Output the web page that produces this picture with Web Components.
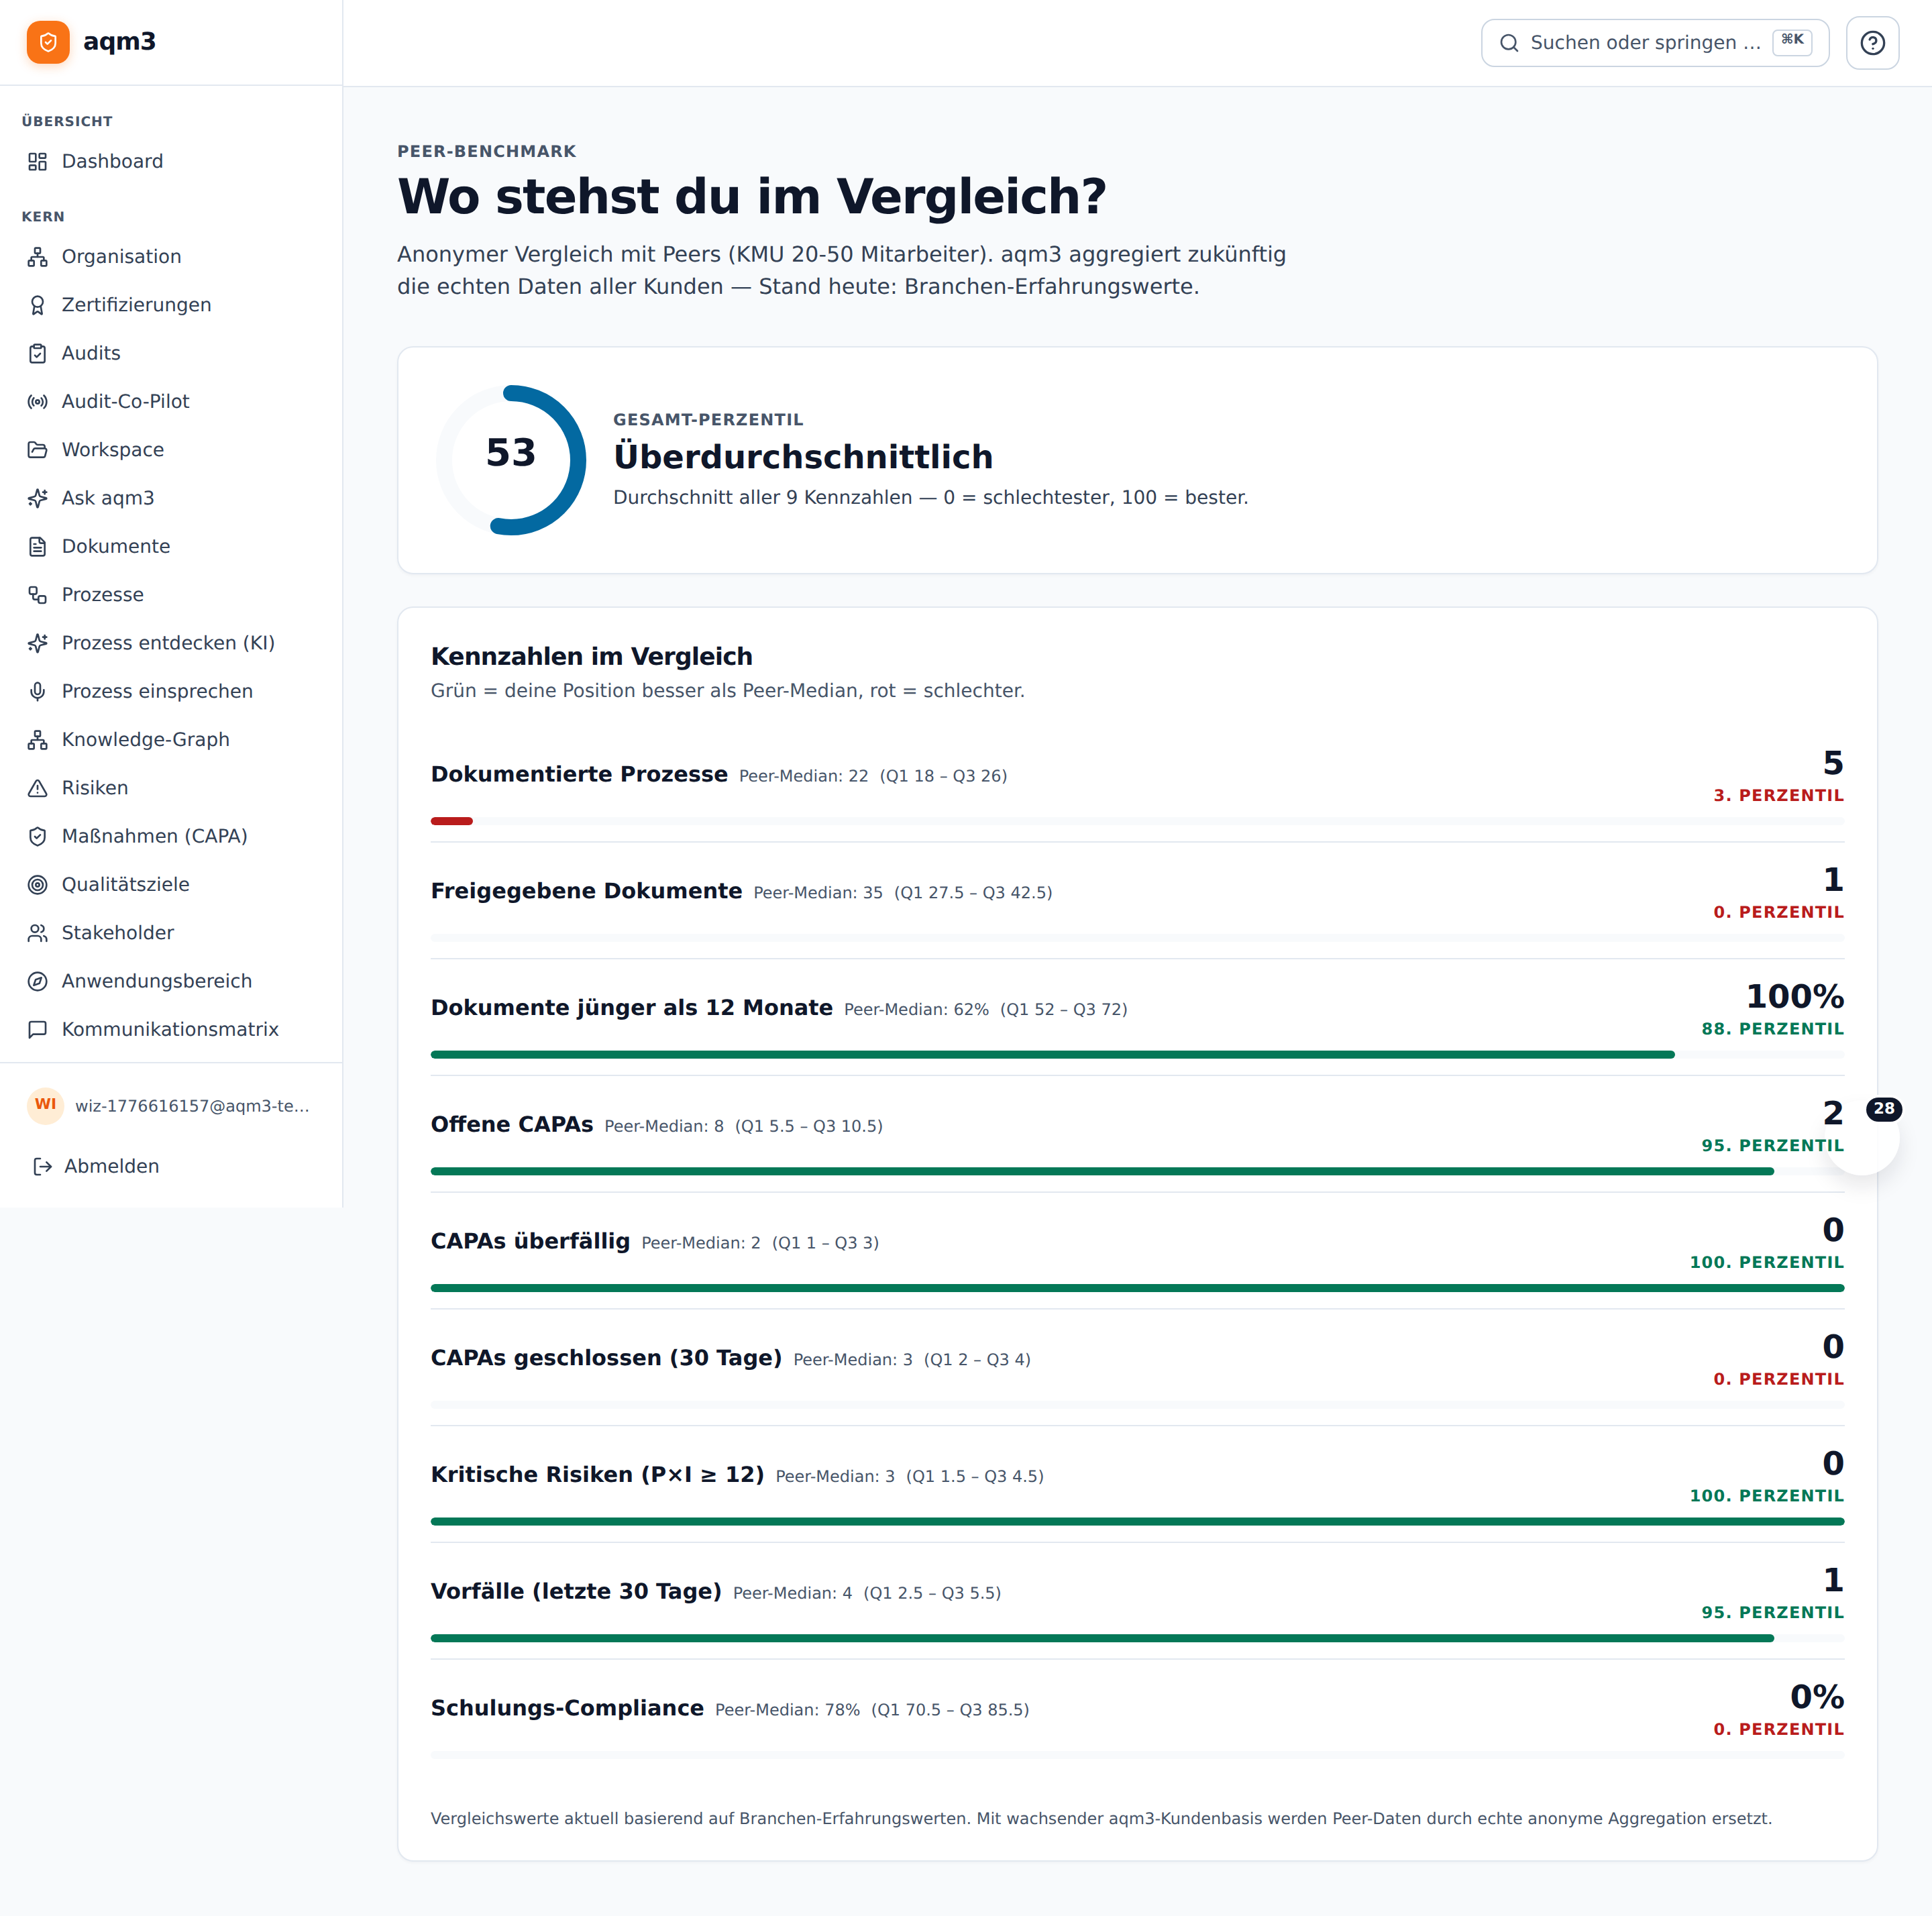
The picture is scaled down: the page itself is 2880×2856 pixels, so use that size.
<!DOCTYPE html>
<html lang="de"><head><meta charset="utf-8"><title>aqm3</title>
<style>
html,body{margin:0;padding:0;background:#f8fafc;color:#0f172a;font-family:"DejaVu Sans",sans-serif;text-rendering:geometricPrecision}
</style></head><body>
<aq-app></aq-app>
<script>
const P={
dash:'<rect width="7" height="9" x="3" y="3" rx="1"/><rect width="7" height="5" x="14" y="3" rx="1"/><rect width="7" height="9" x="14" y="12" rx="1"/><rect width="7" height="5" x="3" y="16" rx="1"/>',
net:'<rect x="16" y="16" width="6" height="6" rx="1"/><rect x="2" y="16" width="6" height="6" rx="1"/><rect x="9" y="2" width="6" height="6" rx="1"/><path d="M5 16v-3a1 1 0 0 1 1-1h12a1 1 0 0 1 1 1v3"/><path d="M12 12V8"/>',
award:'<path d="m15.477 12.89 1.515 8.526a.5.5 0 0 1-.81.47l-3.58-2.687a1 1 0 0 0-1.197 0l-3.586 2.686a.5.5 0 0 1-.81-.469l1.514-8.526"/><circle cx="12" cy="8" r="6"/>',
clip:'<rect width="8" height="4" x="8" y="2" rx="1" ry="1"/><path d="M16 4h2a2 2 0 0 1 2 2v14a2 2 0 0 1-2 2H6a2 2 0 0 1-2-2V6a2 2 0 0 1 2-2h2"/><path d="m9 14 2 2 4-4"/>',
radio:'<path d="M4.9 19.1C1 15.2 1 8.8 4.9 4.9"/><path d="M7.8 16.2c-2.3-2.3-2.3-6.1 0-8.5"/><circle cx="12" cy="12" r="2"/><path d="M16.2 7.8c2.3 2.3 2.3 6.1 0 8.5"/><path d="M19.1 4.9C23 8.8 23 15.1 19.1 19"/>',
folder:'<path d="m6 14 1.5-2.9A2 2 0 0 1 9.24 10H20a2 2 0 0 1 1.94 2.5l-1.54 6a2 2 0 0 1-1.95 1.5H4a2 2 0 0 1-2-2V5a2 2 0 0 1 2-2h3.9a2 2 0 0 1 1.69.9l.81 1.2a2 2 0 0 0 1.67.9H18a2 2 0 0 1 2 2v2"/>',
spark:'<path d="M9.937 15.5A2 2 0 0 0 8.5 14.063l-6.135-1.582a.5.5 0 0 1 0-.962L8.5 9.936A2 2 0 0 0 9.937 8.5l1.582-6.135a.5.5 0 0 1 .963 0L14.063 8.5A2 2 0 0 0 15.5 9.937l6.135 1.581a.5.5 0 0 1 0 .964L15.5 14.063a2 2 0 0 0-1.437 1.437l-1.582 6.135a.5.5 0 0 1-.963 0z"/><path d="M20 3v4"/><path d="M22 5h-4"/><path d="M4 17v2"/><path d="M5 18H3"/>',
file:'<path d="M15 2H6a2 2 0 0 0-2 2v16a2 2 0 0 0 2 2h12a2 2 0 0 0 2-2V7Z"/><path d="M14 2v4a2 2 0 0 0 2 2h4"/><path d="M10 9H8"/><path d="M16 13H8"/><path d="M16 17H8"/>',
flow:'<rect width="8" height="8" x="3" y="3" rx="2"/><path d="M7 11v4a2 2 0 0 0 2 2h4"/><rect width="8" height="8" x="13" y="13" rx="2"/>',
mic:'<path d="M12 2a3 3 0 0 0-3 3v7a3 3 0 0 0 6 0V5a3 3 0 0 0-3-3Z"/><path d="M19 10v2a7 7 0 0 1-14 0v-2"/><line x1="12" x2="12" y1="19" y2="22"/>',
warn:'<path d="m21.73 18-8-14a2 2 0 0 0-3.48 0l-8 14A2 2 0 0 0 4 21h16a2 2 0 0 0 1.73-3"/><path d="M12 9v4"/><path d="M12 17h.01"/>',
shield:'<path d="M20 13c0 5-3.5 7.5-7.66 8.95a1 1 0 0 1-.67-.01C7.5 20.5 4 18 4 13V6a1 1 0 0 1 1-1c2 0 4.5-1.2 6.24-2.72a1.17 1.17 0 0 1 1.52 0C14.51 3.81 17 5 19 5a1 1 0 0 1 1 1z"/><path d="m9 12 2 2 4-4"/>',
target:'<circle cx="12" cy="12" r="10"/><circle cx="12" cy="12" r="6"/><circle cx="12" cy="12" r="2"/>',
users:'<path d="M16 21v-2a4 4 0 0 0-4-4H6a4 4 0 0 0-4 4v2"/><circle cx="9" cy="7" r="4"/><path d="M22 21v-2a4 4 0 0 0-3-3.87"/><path d="M16 3.13a4 4 0 0 1 0 7.75"/>',
compass:'<circle cx="12" cy="12" r="10"/><path d="m16.24 7.76-2.12 6.36-6.36 2.12 2.12-6.36 6.36-2.12z"/>',
msg:'<path d="M21 15a2 2 0 0 1-2 2H7l-4 4V5a2 2 0 0 1 2-2h14a2 2 0 0 1 2 2z"/>',
logout:'<path d="M9 21H5a2 2 0 0 1-2-2V5a2 2 0 0 1 2-2h4"/><polyline points="16 17 21 12 16 7"/><line x1="21" x2="9" y1="12" y2="12"/>',
search:'<circle cx="11" cy="11" r="8"/><path d="m21 21-4.3-4.3"/>',
help:'<circle cx="12" cy="12" r="10"/><path d="M9.09 9a3 3 0 0 1 5.83 1c0 2-3 3-3 3"/><path d="M12 17h.01"/>'
};
const icon=(n,s=32)=>`<svg xmlns="http://www.w3.org/2000/svg" width="${s}" height="${s}" viewBox="0 0 24 24" fill="none" stroke="currentColor" stroke-width="2" stroke-linecap="round" stroke-linejoin="round" style="display:block;flex:none">${P[n]}</svg>`;
class Base extends HTMLElement{
  connectedCallback(){ if(!this.shadowRoot){this.attachShadow({mode:'open'}).innerHTML=this.render();} }
}
class AqNavItem extends Base{render(){return `<style>
:host{display:flex;align-items:center;gap:20px;height:72px;padding:0 0 0 40px;color:#334155;font-size:28px;line-height:40px;white-space:nowrap}
</style>${icon(this.getAttribute('icon'))}<slot></slot>`}}
class AqNavGroup extends Base{render(){return `<style>
:host{display:block}
.l{font-size:20px;line-height:28px;font-weight:700;letter-spacing:1px;color:#475569;padding:0 0 0 32px;margin-bottom:10px;text-transform:uppercase}
</style><div class="l">${this.getAttribute('label')}</div><slot></slot>`}}
class AqSidebar extends Base{render(){return `<style>
:host{display:flex;flex-direction:column;width:512px;box-sizing:border-box;height:1800px;background:#fff;border-right:2px solid #e2e8f0}
.brand{height:126px;box-sizing:content-box;display:flex;align-items:center;gap:20px;padding-left:40px;border-bottom:2px solid #e2e8f0;flex:none}
.logo{width:64px;height:64px;border-radius:20px;background:#f97316;color:#fff;display:flex;align-items:center;justify-content:center;box-shadow:0 4px 16px rgba(249,115,22,.28)}
.name{font-size:36px;font-weight:700;letter-spacing:-.9px;color:#0f172a;line-height:48px}
nav{flex:1;display:flex;flex-direction:column;gap:32px;padding-top:39px}
.foot{border-top:2px solid #e2e8f0;height:217px;flex:none;box-sizing:border-box;padding-top:36px}
.user{display:flex;align-items:center;gap:16px;padding-left:40px}
.av{width:56px;height:56px;border-radius:50%;background:#ffedd5;color:#ea580c;font-size:22px;font-weight:700;display:flex;align-items:center;justify-content:center;line-height:50px;padding-bottom:4px;box-sizing:border-box;flex:none}
.mail{font-size:24px;color:#475569;white-space:nowrap}
.out{display:flex;align-items:center;gap:16px;font-size:28px;color:#334155;padding-left:48px;margin-top:42px;line-height:40px}
</style>
<div class="brand"><div class="logo">${icon('shield')}</div><div class="name">aqm3</div></div>
<nav>
<aq-nav-group label="Übersicht"><aq-nav-item icon="dash">Dashboard</aq-nav-item></aq-nav-group>
<aq-nav-group label="Kern">
<aq-nav-item icon="net">Organisation</aq-nav-item>
<aq-nav-item icon="award">Zertifizierungen</aq-nav-item>
<aq-nav-item icon="clip">Audits</aq-nav-item>
<aq-nav-item icon="radio">Audit-Co-Pilot</aq-nav-item>
<aq-nav-item icon="folder">Workspace</aq-nav-item>
<aq-nav-item icon="spark">Ask aqm3</aq-nav-item>
<aq-nav-item icon="file">Dokumente</aq-nav-item>
<aq-nav-item icon="flow">Prozesse</aq-nav-item>
<aq-nav-item icon="spark">Prozess entdecken (KI)</aq-nav-item>
<aq-nav-item icon="mic">Prozess einsprechen</aq-nav-item>
<aq-nav-item icon="net">Knowledge-Graph</aq-nav-item>
<aq-nav-item icon="warn">Risiken</aq-nav-item>
<aq-nav-item icon="shield">Maßnahmen (CAPA)</aq-nav-item>
<aq-nav-item icon="target">Qualitätsziele</aq-nav-item>
<aq-nav-item icon="users">Stakeholder</aq-nav-item>
<aq-nav-item icon="compass">Anwendungsbereich</aq-nav-item>
<aq-nav-item icon="msg">Kommunikationsmatrix</aq-nav-item>
</aq-nav-group>
</nav>
<div class="foot"><div class="user"><div class="av">WI</div><div class="mail">wiz-1776616157@aqm3-te…</div></div>
<div class="out">${icon('logout')}<span>Abmelden</span></div></div>`}}
class AqTopbar extends Base{render(){return `<style>
:host{display:flex;justify-content:flex-end;align-items:center;gap:24px;height:128px;padding:0 48px 0 0;background:#fff;border-bottom:2px solid #e2e8f0}
.s{width:520px;height:72px;box-sizing:border-box;border:2px solid #cbd5e1;border-radius:20px;background:#fff;display:flex;align-items:center;padding:0 26px 0 24px;gap:16px;color:#475569;font-size:28px;white-space:nowrap}
.s span{flex:1;margin-top:-2px}
kbd{font:700 20px/24px "DejaVu Sans",sans-serif;width:60px;height:40px;box-sizing:border-box;border:2px solid #cbd5e1;border-radius:8px;text-align:center;color:#475569;margin-right:-2px}
.h{width:80px;height:80px;box-sizing:border-box;border:2px solid #cbd5e1;border-radius:20px;display:flex;align-items:center;justify-content:center;color:#334155;background:#fff}
</style><div class="s">${icon('search')}<span>Suchen oder springen …</span><kbd>⌘K</kbd></div><div class="h">${icon('help',40)}</div>`}}
class AqPageHead extends Base{render(){return `<style>
:host{display:block}
.k{font-size:24px;line-height:32px;font-weight:700;letter-spacing:1.2px;color:#475569;text-transform:uppercase}
h1{margin:11px 0 0;font-size:72px;line-height:80px;font-weight:700;letter-spacing:-1.8px;color:#0f172a}
p{margin:22px 0 0;font-size:32px;line-height:48px;color:#334155;max-width:1344px}
</style><div class="k">Peer-Benchmark</div><h1>Wo stehst du im Vergleich?</h1><p>Anonymer Vergleich mit Peers (KMU 20-50 Mitarbeiter). aqm3 aggregiert zukünftig die echten Daten aller Kunden — Stand heute: Branchen-Erfahrungswerte.</p>`}}
class AqCard extends Base{render(){return `<style>
:host{display:block;background:#fff;border:2px solid #e2e8f0;border-radius:24px;box-shadow:0 2px 4px rgba(15,23,42,.04)}
</style><slot></slot>`}}
class AqScore extends Base{render(){const r=100,c=2*Math.PI*r,v=53;return `<style>
:host{display:flex;align-items:center;gap:40px;padding:56px}
.ring{position:relative;width:224px;height:224px;flex:none}
svg{display:block;transform:rotate(-90deg)}
.n{position:absolute;inset:0;display:flex;align-items:center;justify-content:center;font-size:56px;font-weight:700;color:#0f172a;padding-bottom:22px;box-sizing:border-box}
.k{font-size:24px;line-height:32px;font-weight:700;letter-spacing:1.2px;color:#475569;text-transform:uppercase}
.t{font-size:48px;line-height:64px;font-weight:700;color:#0f172a;margin-top:8px}
.d{font-size:28px;line-height:40px;color:#334155;margin-top:8px}
</style><div class="ring"><svg width="224" height="224" viewBox="0 0 224 224"><circle cx="112" cy="112" r="${r}" fill="none" stroke="#f8fafc" stroke-width="24"/><circle cx="112" cy="112" r="${r}" fill="none" stroke="#0369a1" stroke-width="24" stroke-linecap="round" stroke-dasharray="${c*v/100} ${c}"/></svg><div class="n">${v}</div></div>
<div><div class="k">Gesamt-Perzentil</div><div class="t">Überdurchschnittlich</div><div class="d">Durchschnitt aller 9 Kennzahlen — 0 = schlechtester, 100 = bester.</div></div>`}}
class AqMetric extends Base{render(){const a=n=>this.getAttribute(n),p=+a('p'),col=p>=50?'#047857':'#b91c1c';return `<style>
:host{display:block;padding:24px 0;border-bottom:2px solid #e2e8f0}
:host(:last-of-type){border-bottom:0}
.top{display:flex;justify-content:space-between;align-items:center;gap:32px;margin-bottom:16px}
.l{display:flex;align-items:baseline;gap:16px;white-space:nowrap}
.t{font-size:32px;font-weight:700;color:#0f172a;line-height:44px}
.m{font-size:24px;color:#475569;line-height:32px;display:flex;gap:16px}
.r{text-align:right}
.v{font-size:48px;line-height:64px;font-weight:700;color:#0f172a;position:relative;z-index:2}
.pc{font-size:24px;line-height:32px;font-weight:700;letter-spacing:1.2px;color:${col};text-transform:uppercase;position:relative;z-index:2}
.tr{height:12px;border-radius:6px;background:#f8fafc;overflow:hidden}
.f{height:100%;width:${p}%;background:${col};border-radius:6px}
</style><div class="top"><div class="l"><span class="t">${a('t')}</span><span class="m"><span>Peer-Median: ${a('med')}</span><span>(Q1 ${a('q1')} – Q3 ${a('q3')})</span></span></div><div class="r"><div class="v">${a('v')}</div><div class="pc">${p}. Perzentil</div></div></div><div class="tr"><div class="f"></div></div>`}}
class AqMetrics extends Base{render(){return `<style>
:host{display:block;padding:48px 48px 42px}
h2{margin:0;font-size:36px;line-height:52px;font-weight:700;letter-spacing:-.9px;color:#0f172a}
.s{font-size:28px;line-height:40px;color:#475569;margin-top:4px;margin-bottom:32px}
.n{font-size:24px;line-height:40px;color:#475569;margin-top:45px}
</style><h2>Kennzahlen im Vergleich</h2><div class="s">Grün = deine Position besser als Peer-Median, rot = schlechter.</div><slot></slot><div class="n">Vergleichswerte aktuell basierend auf Branchen-Erfahrungswerten. Mit wachsender aqm3-Kundenbasis werden Peer-Daten durch echte anonyme Aggregation ersetzt.</div>`}}
class AqFab extends Base{render(){return `<style>
:host{position:absolute;z-index:1;left:2720px;top:1640px;width:112px;height:112px;border-radius:50%;background:rgba(255,255,255,.85);box-shadow:0 16px 32px rgba(15,23,42,.1)}
.b{position:absolute;right:-4px;top:-4px;height:36px;width:54px;background:#0f172a;color:#fff;font-size:23px;font-weight:700;line-height:34px;text-align:center;border-radius:18px;box-shadow:0 0 0 4px #fff}
</style><div class="b">28</div>`}}
class AqApp extends Base{render(){return `<style>
:host{display:grid;grid-template-columns:512px 1fr;min-height:2856px;align-items:start;position:relative}
main{padding:80px 80px 81px;display:flex;flex-direction:column}
aq-card{margin-top:48px}
.c0{margin-top:65px}
</style><aq-sidebar></aq-sidebar><div><aq-topbar></aq-topbar><main><aq-page-head></aq-page-head>
<aq-card class="c0"><aq-score></aq-score></aq-card>
<aq-card><aq-metrics>
<aq-metric t="Dokumentierte Prozesse" med="22" q1="18" q3="26" v="5" p="3"></aq-metric>
<aq-metric t="Freigegebene Dokumente" med="35" q1="27.5" q3="42.5" v="1" p="0"></aq-metric>
<aq-metric t="Dokumente jünger als 12 Monate" med="62%" q1="52" q3="72" v="100%" p="88"></aq-metric>
<aq-metric t="Offene CAPAs" med="8" q1="5.5" q3="10.5" v="2" p="95"></aq-metric>
<aq-metric t="CAPAs überfällig" med="2" q1="1" q3="3" v="0" p="100"></aq-metric>
<aq-metric t="CAPAs geschlossen (30 Tage)" med="3" q1="2" q3="4" v="0" p="0"></aq-metric>
<aq-metric t="Kritische Risiken (P×I ≥ 12)" med="3" q1="1.5" q3="4.5" v="0" p="100"></aq-metric>
<aq-metric t="Vorfälle (letzte 30 Tage)" med="4" q1="2.5" q3="5.5" v="1" p="95"></aq-metric>
<aq-metric t="Schulungs-Compliance" med="78%" q1="70.5" q3="85.5" v="0%" p="0"></aq-metric>
</aq-metrics></aq-card></main></div><aq-fab></aq-fab>`}}
[['aq-nav-item',AqNavItem],['aq-nav-group',AqNavGroup],['aq-sidebar',AqSidebar],['aq-topbar',AqTopbar],['aq-page-head',AqPageHead],['aq-card',AqCard],['aq-score',AqScore],['aq-metric',AqMetric],['aq-metrics',AqMetrics],['aq-fab',AqFab],['aq-app',AqApp]].forEach(([n,c])=>customElements.define(n,c));
</script></body></html>
